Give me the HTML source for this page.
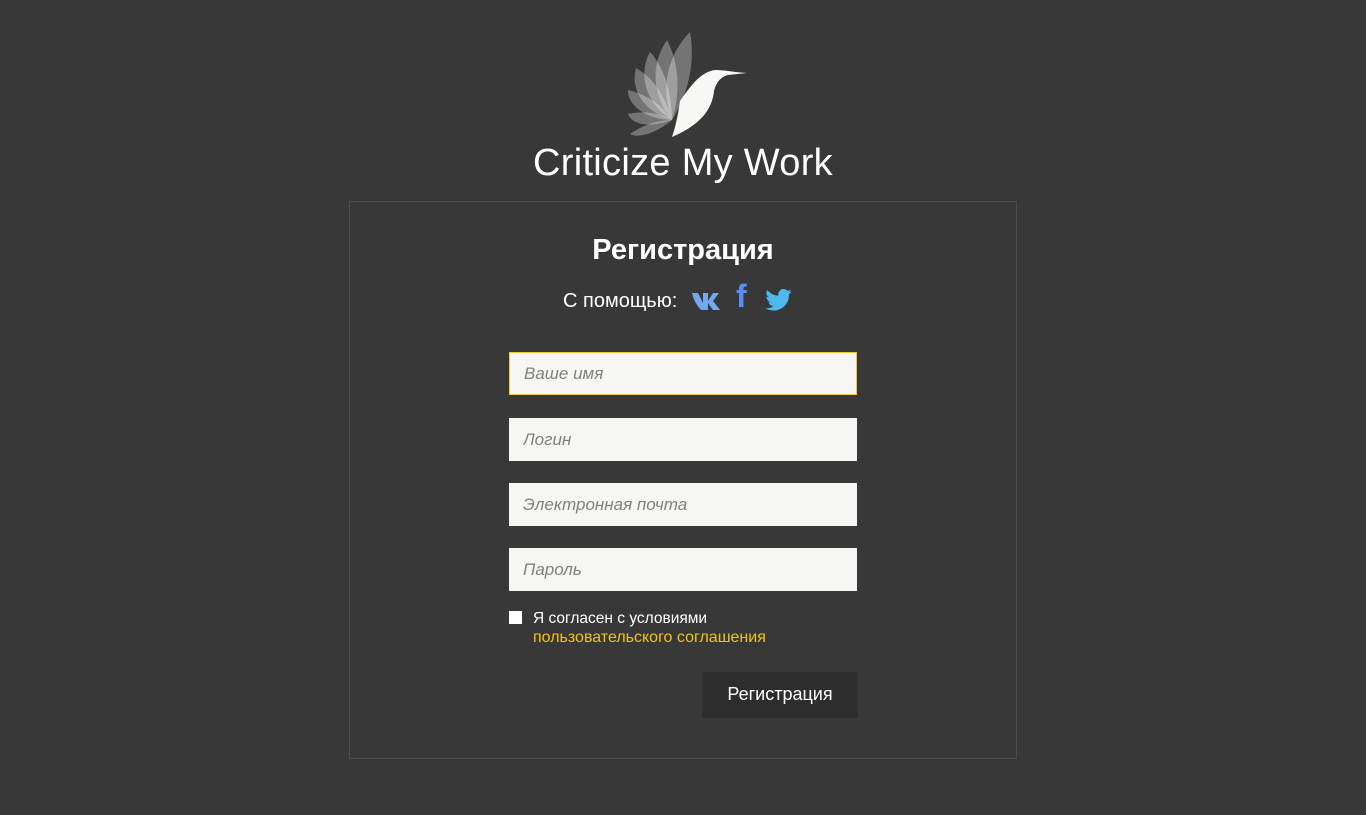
<!DOCTYPE html>
<html><head><meta charset="utf-8"><style>
body{margin:0;background:#383838;width:1366px;height:815px;font-family:"Liberation Sans",sans-serif;position:relative;overflow:hidden;color:#fff}
.title{position:absolute;left:0;width:1366px;top:142px;text-align:center;font-size:38px;font-weight:300;color:#fff;letter-spacing:0.3px}
.box{position:absolute;left:349px;top:201px;width:666px;height:556px;border:1px solid #4c4c4c}
h1{position:absolute;left:0;width:1366px;top:234px;margin:0;text-align:center;font-size:29px;font-weight:bold}
.soc{position:absolute;left:563px;top:290px;font-size:20px}
input{position:absolute;left:509px;width:348px;height:43px;box-sizing:border-box;border:none;background:#f6f6f4;font-family:"Liberation Sans",sans-serif;font-style:italic;font-size:17px;padding:0 14px;color:#888}
input::placeholder{color:#808080}
.cb{position:absolute;left:509px;top:611px;width:13px;height:13px;background:#fff}
.agr{position:absolute;left:533px;top:609px;font-size:15.5px;line-height:19px}
.agr span{color:#f2c40f;font-size:16px}
.btn{position:absolute;left:702px;top:672px;width:156px;height:46px;background:#2d2d2d;font-size:18px;text-align:center;line-height:44px}
</style></head><body>
<svg style="position:absolute;left:600px;top:25px" width="170" height="120" viewBox="0 0 170 120">
<g fill="#fff" transform="translate(72,95)">
<path d="M0 0 C-12 -30 -5 -65 18 -88 C24 -55 15 -25 0 0Z" opacity="0.3"/>
<path d="M0 0 C-20 -25 -22 -55 -5 -80 C8 -55 8 -25 0 0Z" opacity="0.3"/>
<path d="M0 0 C-25 -15 -35 -45 -22 -68 C-5 -50 0 -20 0 0Z" opacity="0.3"/>
<path d="M0 0 C-28 -8 -42 -30 -36 -52 C-15 -40 -5 -18 0 0Z" opacity="0.3"/>
<path d="M0 0 C-25 0 -45 -15 -44 -30 C-22 -25 -8 -12 0 0Z" opacity="0.3"/>
<path d="M0 0 C-22 8 -40 5 -44 -6 C-25 -10 -10 -6 0 0Z" opacity="0.3"/>
<path d="M0 0 C-18 15 -35 18 -42 14 C-28 4 -12 0 0 0Z" opacity="0.3"/>
</g>
<path fill="#f7f7f5" d="M72 112 C76 100 78 90 80 76 C90 62 100 47 115 45 C125 45 132 47 147 48 L128 50 C120 52 116 58 114 66 C112 85 100 100 72 112Z"/>
</svg>
<div class="title">Criticize My Work</div>
<div class="box"></div>
<h1>Регистрация</h1>
<div class="soc">С помощью:</div>
<svg style="position:absolute;left:691px;top:290px" width="33" height="20" viewBox="0 0 33 20"><path fill="#74a8ee" d="M1 3h6l5 10V3h5v8l5-8h6l-6 8 7 9h-7l-5-7v7h-6C9 20 3 12 1 3z"/></svg>
<div style="position:absolute;left:736px;top:278px;font-size:32px;font-weight:bold;color:#5a8ef0">f</div>
<svg style="position:absolute;left:765px;top:289px" width="27" height="22" viewBox="0 0 24 20"><path fill="#4eb8ef" d="M24 2.3c-.9.4-1.8.6-2.8.8 1-.6 1.8-1.6 2.2-2.7-1 .6-2 1-3.1 1.2A4.9 4.9 0 0 0 11.9 6C7.8 5.8 4.2 3.9 1.7.9c-1.4 2.4-.6 5.4 1.5 6.6-.8 0-1.6-.2-2.2-.6 0 2.4 1.7 4.5 4 5-.7.2-1.5.2-2.2.1.6 2 2.5 3.4 4.6 3.4A9.9 9.9 0 0 1 0 17.4 14 14 0 0 0 21.5 4.9c1-.7 1.8-1.6 2.5-2.6z"/></svg>
<input style="top:352px;border:1px solid #f0c93a" placeholder="Ваше имя">
<input style="top:418px" placeholder="Логин">
<input style="top:483px" placeholder="Электронная почта">
<input style="top:548px" placeholder="Пароль">
<div class="cb"></div>
<div class="agr">Я согласен с условиями<br><span>пользовательского соглашения</span></div>
<div class="btn">Регистрация</div>
</body></html>
